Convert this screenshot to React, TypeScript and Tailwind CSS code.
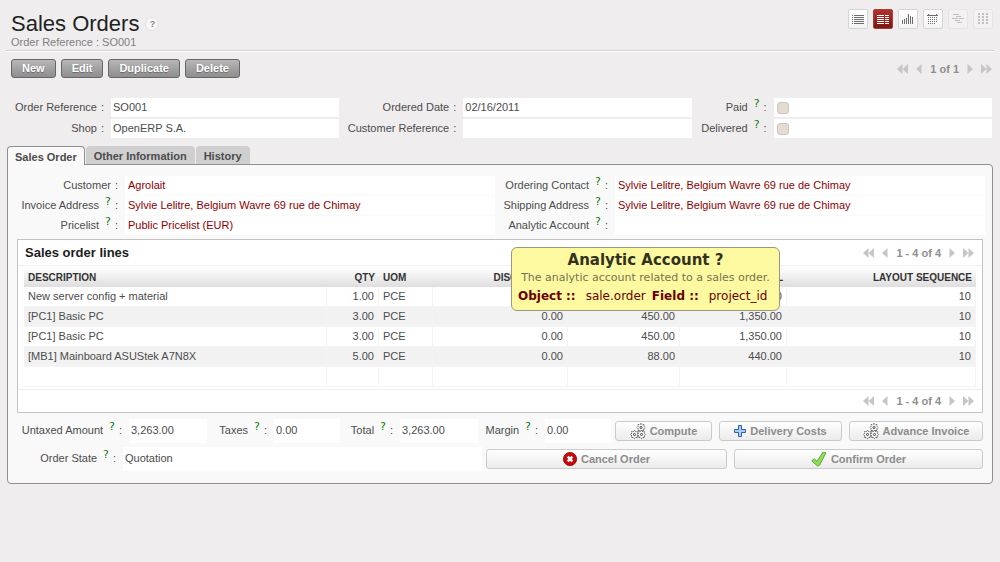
import React from 'react';
import clsx from 'clsx';

interface OrderLine {
  description: string;
  qty: string;
  uom: string;
  discount: string;
  price: string;
  subtotal: string;
  sequence: string;
}

const lines: OrderLine[] = [
  { description: 'New server config + material', qty: '1.00', uom: 'PCE', discount: '0.00', price: '123.00', subtotal: '123.00', sequence: '10' },
  { description: '[PC1] Basic PC', qty: '3.00', uom: 'PCE', discount: '0.00', price: '450.00', subtotal: '1,350.00', sequence: '10' },
  { description: '[PC1] Basic PC', qty: '3.00', uom: 'PCE', discount: '0.00', price: '450.00', subtotal: '1,350.00', sequence: '10' },
  { description: '[MB1] Mainboard ASUStek A7N8X', qty: '5.00', uom: 'PCE', discount: '0.00', price: '88.00', subtotal: '440.00', sequence: '10' },
];

/* ---------- icons ---------- */

const ListIcon = () => (
  <svg width="12" height="9" viewBox="0 0 12 9" fill="currentColor" shapeRendering="crispEdges">
    {[0, 2, 4, 6, 8].map((y) => (
      <g key={y}>
        <rect x="0" y={y} width="1" height="1" />
        <rect x="2" y={y} width="10" height="1" />
      </g>
    ))}
  </svg>
);

const FormIcon = () => (
  <svg width="12" height="9" viewBox="0 0 12 9" fill="currentColor" shapeRendering="crispEdges">
    {[0, 2, 4, 6, 8].map((y) => (
      <g key={y}>
        <rect x="0" y={y} width="7" height="1" />
        <rect x="8" y={y} width="4" height="1" />
      </g>
    ))}
  </svg>
);

const GraphIcon = () => (
  <svg width="12" height="10" viewBox="0 0 12 10" fill="currentColor" shapeRendering="crispEdges">
    <rect x="0" y="6" width="1" height="4" />
    <rect x="2" y="5" width="1" height="5" />
    <rect x="4" y="4" width="1" height="6" />
    <rect x="6" y="0" width="1" height="10" />
    <rect x="8" y="2" width="1" height="8" />
    <rect x="10" y="3" width="1" height="7" />
  </svg>
);

const CalendarIcon = () => (
  <svg width="12" height="11" viewBox="0 0 12 11" fill="currentColor" shapeRendering="crispEdges">
    <rect x="1" y="0" width="1" height="2" />
    <rect x="9" y="0" width="1" height="2" />
    <rect x="0" y="1" width="11" height="1" />
    {[3, 5, 7, 9].map((y) =>
      [1, 3, 5, 7, 9].map((x) => (x === 9 && y === 9 ? null : <rect key={`${x}-${y}`} x={x} y={y} width="1" height="1" />)),
    )}
  </svg>
);

const GanttIcon = () => (
  <svg width="12" height="10" viewBox="0 0 12 10" fill="currentColor" shapeRendering="crispEdges">
    <rect x="1" y="0" width="6" height="1" />
    <rect x="4" y="2" width="5" height="1" />
    <rect x="0" y="4" width="6" height="1" />
    <rect x="7" y="4" width="5" height="1" />
    <rect x="3" y="6" width="5" height="1" />
    <rect x="5" y="8" width="5" height="1" />
  </svg>
);

const KanbanIcon = () => (
  <svg width="10" height="12" viewBox="0 0 10 12" fill="currentColor" shapeRendering="crispEdges">
    {[0, 3, 6, 9].map((y) => [0, 4, 8].map((x) => <rect key={`${x}-${y}`} x={x} y={y} width="2" height="2" />))}
  </svg>
);

const Arrow = ({ dir, double }: { dir: 'left' | 'right'; double?: boolean }) => (
  <svg
    width={double ? 11 : 6}
    height="10"
    viewBox={double ? '0 0 11 10' : '0 0 6 10'}
    fill="currentColor"
    className={dir === 'right' ? 'rotate-180' : ''}
  >
    <path d="M0 5L5.500 0V10Z" />
    {double && <path d="M5.500 5L11 0V10Z" />}
  </svg>
);

const Cog = ({ x, y }: { x: number; y: number }) => (
  <g transform={`translate(${x} ${y})`}>
    <path d="M0 -4L1.200 -2.900L2.900 -2.900L2.900 -1.200L4 0L2.900 1.200L2.900 2.900L1.200 2.900L0 4L-1.200 2.900L-2.900 2.900L-2.900 1.200L-4 0L-2.900 -1.200L-2.900 -2.900L-1.200 -2.900Z" fill="#fff" stroke="#444" strokeWidth="0.900" strokeDasharray="1.800 0.700" />
    <circle r="1.100" fill="#fff" stroke="#333" strokeWidth="0.900" />
  </g>
);

const GearsIcon = () => (
  <svg width="16" height="16" viewBox="0 0 16 16">
    <Cog x={11} y={4.5} />
    <Cog x={4.5} y={11.5} />
    <Cog x={11.5} y={11.5} />
  </svg>
);

const PlusIcon = () => (
  <svg width="12" height="12" viewBox="0 0 12 12">
    <path d="M4.500 .5h3v4h4v3h-4v4h-3v-4h-4v-3h4z" fill="#a9cdf2" stroke="#2f62a8" strokeLinejoin="round" />
  </svg>
);

const CancelIcon = () => (
  <svg width="14" height="14" viewBox="0 0 14 14">
    <circle cx="7" cy="7" r="6.600" fill="#c40a0a" stroke="#980000" strokeWidth="0.800" />
    <path d="M4.700 4.700l4.600 4.600M9.300 4.700l-4.600 4.600" stroke="#fff" strokeWidth="2.400" />
  </svg>
);

const CheckIcon = () => (
  <svg width="16" height="16" viewBox="0 0 16 16">
    <path d="M.8 9.800L3.300 7.800L6 10.300L12 1.200L15 1.800L8.500 14.300L6.300 15Z" fill="#8fdc58" stroke="#5aa32c" strokeWidth="0.900" strokeLinejoin="round" />
  </svg>
);

/* ---------- building blocks ---------- */

const Pager = ({ text }: { text: string }) => (
  <nav className="flex items-center gap-2 font-bold text-[#8f8f8f]">
    <button type="button" aria-label="First" className="text-[#c6c6c6]"><Arrow dir="left" double /></button>
    <button type="button" aria-label="Previous" className="text-[#c6c6c6]"><Arrow dir="left" /></button>
    <span>{text}</span>
    <button type="button" aria-label="Next" className="text-[#c6c6c6]"><Arrow dir="right" /></button>
    <button type="button" aria-label="Last" className="text-[#c6c6c6]"><Arrow dir="right" double /></button>
  </nav>
);

interface FieldLabelProps {
  text: string;
  htmlFor: string;
  help?: boolean;
  children?: React.ReactNode;
}

const FieldLabel: React.FC<FieldLabelProps> = ({ text, htmlFor, help, children }) => (
  <div className="relative flex items-center justify-end pr-[7px] pb-[2px] whitespace-nowrap">
    <label htmlFor={htmlFor} className="flex">
      {text}
      {help && <sup className="top-0 -mt-[3px] ml-[6px] text-[11px] leading-3 text-[#0f7a0f] font-['DejaVu_Sans',sans-serif]">?</sup>}
      <span className="ml-1">:</span>
    </label>
    {children}
  </div>
);

const TextField = ({ id, value = '' }: { id: string; value?: string }) => (
  <input id={id} type="text" readOnly defaultValue={value} className="w-full min-w-0 bg-white px-[2px] pb-[2px] outline-none" />
);

const LinkField = ({ id, value }: { id: string; value: string }) => (
  <div className="flex items-center bg-white px-[3px] pb-[2px]">
    <a id={id} href="#" className="text-[#8b0000]">{value}</a>
  </div>
);

const CheckField = ({ id }: { id: string }) => (
  <div className="flex items-center bg-white px-[3px]">
    <input id={id} type="checkbox" disabled className="size-3 appearance-none rounded-[3px] border border-[#cfc6bb] bg-[#e4dcd2]" />
  </div>
);

const ToolbarButton = ({ children }: { children: React.ReactNode }) => (
  <button
    type="button"
    className="h-[19px] rounded-[3px] border border-[#666] bg-linear-to-b from-[#b8b8b8] to-[#8e8e8e] px-[10px] pb-px font-bold text-white text-shadow-[0_1px_1px_#666]"
  >
    {children}
  </button>
);

const ActionButton = ({ icon, children }: { icon: React.ReactNode; children: React.ReactNode }) => (
  <button
    type="button"
    className="flex h-5 items-center justify-center gap-1 rounded-[3px] border border-[#cbcbcb] bg-linear-to-b from-white to-[#ebebeb] font-bold whitespace-nowrap text-[#8c8c8c]"
  >
    {icon}
    {children}
  </button>
);

const views = [
  { name: 'List', icon: <ListIcon /> },
  { name: 'Form', icon: <FormIcon />, active: true },
  { name: 'Graph', icon: <GraphIcon /> },
  { name: 'Calendar', icon: <CalendarIcon /> },
  { name: 'Gantt', icon: <GanttIcon />, disabled: true },
  { name: 'Kanban', icon: <KanbanIcon />, disabled: true },
];

const ViewSwitcher = () => (
  <div className="flex gap-[5px]">
    {views.map((v) => (
      <button
        key={v.name}
        type="button"
        aria-label={v.name}
        disabled={v.disabled}
        className={clsx(
          'flex size-5 items-center justify-center rounded-[2px] border',
          v.active && 'border-[#a04038] bg-linear-to-b from-[#b5302a] to-[#7d1712] text-white',
          v.disabled && 'border-[#e6e4e5] bg-[#f3f1f2] text-[#c0c0c0]',
          !v.active && !v.disabled && 'border-[#d5d5d5] bg-linear-to-b from-white to-[#f4f4f4] text-[#6e6e6e]',
        )}
      >
        {v.icon}
      </button>
    ))}
  </div>
);

const HelpTooltip = () => (
  <div
    role="tooltip"
    className="absolute top-[31px] left-4 z-10 w-[269px] rounded-md border border-[#98987a] bg-[#fdf9a1] px-1 pt-[3px] pb-[5px] text-center font-['DejaVu_Sans',sans-serif]"
  >
    <h3 className="text-[15px] leading-[18px] font-bold text-[#32321f]">Analytic Account ?</h3>
    <p className="text-[11px] leading-[18px] text-[#74744f]">The analytic account related to a sales order.</p>
    <p className="flex gap-[6px] px-[2px] text-[12px] leading-[18px] text-[#6b0000]">
      <b>Object ::</b>
      <span className="ml-1">sale.order</span>
      <b>Field ::</b>
      <span className="ml-1">project_id</span>
    </p>
  </div>
);

const OrderLines = () => {
  const cell = 'h-5 border-r border-b border-[#f4f4f4] px-1 pb-px';
  const head = 'h-5 px-1 pt-[2px] text-[10px] font-bold';
  return (
    <section className="mt-1 mr-[2px] border border-[#c2c2c2] bg-white">
      <div className="flex h-[26px] items-center justify-between border-b border-[#f0f0f0] pr-2 pl-[7px]">
        <h2 className="text-[13px] font-bold text-[#1c1c1c]">Sales order lines</h2>
        <Pager text="1 - 4 of 4" />
      </div>
      <div className="px-[6px] pt-px pb-[2px]">
        <table className="w-full table-fixed border-separate border-spacing-0">
          <colgroup>
            <col className="w-[303px]" />
            <col className="w-[52px]" />
            <col className="w-[54px]" />
            <col className="w-[135px]" />
            <col className="w-[112px]" />
            <col className="w-[107px]" />
            <col className="w-[189px]" />
          </colgroup>
          <thead className="bg-linear-to-b from-white to-[#dedede] text-[#333]">
            <tr>
              <th className={clsx(head, 'text-left')}>DESCRIPTION</th>
              <th className={clsx(head, 'text-right')}>QTY</th>
              <th className={clsx(head, 'text-left')}>UOM</th>
              <th className={clsx(head, 'text-right')}>DISCOUNT (%)</th>
              <th className={clsx(head, 'text-right')}>UNIT PRICE</th>
              <th className={clsx(head, 'text-right')}>SUBTOTAL</th>
              <th className={clsx(head, 'text-right')}>LAYOUT SEQUENCE</th>
            </tr>
          </thead>
          <tbody>
            {lines.map((line, i) => (
              <tr key={i} className="even:bg-[#f2f2f2]">
                <td className={cell}>{line.description}</td>
                <td className={clsx(cell, 'text-right')}>{line.qty}</td>
                <td className={cell}>{line.uom}</td>
                <td className={clsx(cell, 'text-right')}>{line.discount}</td>
                <td className={clsx(cell, 'text-right')}>{line.price}</td>
                <td className={clsx(cell, 'text-right')}>{line.subtotal}</td>
                <td className={clsx(cell, 'text-right')}>{line.sequence}</td>
              </tr>
            ))}
            <tr>
              {[0, 1, 2, 3, 4, 5, 6].map((c) => (
                <td key={c} className={cell} />
              ))}
            </tr>
          </tbody>
        </table>
      </div>
      <div className="flex h-[23px] items-center justify-end border-t border-[#f0f0f0] pr-2">
        <Pager text="1 - 4 of 4" />
      </div>
    </section>
  );
};

export default function App() {
  return (
    <main className="min-h-screen bg-[#efedee] pb-8 font-['Liberation_Sans',Arial,sans-serif] text-[11px] leading-3 text-[#4c4c4c]">
      <header className="mx-[6px] flex items-start justify-between border-b border-[#d2d0d1] pl-[5px] pr-px pb-[2px] shadow-[0_1px_0_#fff]">
        <div className="pt-3">
          <h1 className="flex items-center gap-[6px] text-[22px] leading-6 text-[#222]">
            Sales Orders
            <a href="#" aria-label="Help" className="flex size-[14px] items-center justify-center rounded-full border border-[#e2e2e2] bg-[#f8f8f8] text-[9px] font-bold text-[#8a8a8a]">?</a>
          </h1>
          <p className="text-[#808080]">Order Reference : SO001</p>
        </div>
        <div className="pt-[9px]">
          <ViewSwitcher />
        </div>
      </header>

      <div className="flex items-center justify-between pt-2 pr-2 pl-[11px]">
        <div className="flex gap-[5px]">
          <ToolbarButton>New</ToolbarButton>
          <ToolbarButton>Edit</ToolbarButton>
          <ToolbarButton>Duplicate</ToolbarButton>
          <ToolbarButton>Delete</ToolbarButton>
        </div>
        <Pager text="1 of 1" />
      </div>

      <div className="mx-2 mt-5 grid auto-rows-[19px] grid-cols-[103px_23fr_124px_23fr_82px_22fr] gap-y-[2px]">
        <FieldLabel htmlFor="ref" text="Order Reference" />
        <TextField id="ref" value="SO001" />
        <FieldLabel htmlFor="date" text="Ordered Date" />
        <TextField id="date" value="02/16/2011" />
        <FieldLabel htmlFor="paid" text="Paid" help />
        <CheckField id="paid" />
        <FieldLabel htmlFor="shop" text="Shop" />
        <TextField id="shop" value="OpenERP S.A." />
        <FieldLabel htmlFor="custref" text="Customer Reference" />
        <TextField id="custref" />
        <FieldLabel htmlFor="delivered" text="Delivered" help />
        <CheckField id="delivered" />
      </div>

      <div className="mx-[7px] mt-2">
        <div role="tablist" className="flex h-[18px] gap-px font-bold">
          <button type="button" role="tab" aria-selected="true" className="relative z-10 h-[19px] rounded-t-[4px] border border-b-0 border-[#8f8f8f] bg-[#f9f9f9] px-[7px] pt-[2px]">
            Sales Order
          </button>
          <button type="button" role="tab" aria-selected="false" className="rounded-t-[4px] bg-[#cfcfcf] px-2 pt-[2px]">Other Information</button>
          <button type="button" role="tab" aria-selected="false" className="rounded-t-[4px] bg-[#cfcfcf] px-2 pt-[2px]">History</button>
        </div>

        <div className="rounded-b-[4px] rounded-tr-[4px] border border-[#8f8f8f] bg-[#f9f9f9] pt-[11px] pr-[7px] pb-3 pl-[9px]">
          <div className="grid auto-rows-[19px] grid-cols-[108px_1fr_120px_1fr] gap-y-px">
            <FieldLabel htmlFor="customer" text="Customer" />
            <LinkField id="customer" value="Agrolait" />
            <FieldLabel htmlFor="contact" text="Ordering Contact" help />
            <LinkField id="contact" value="Sylvie Lelitre, Belgium Wavre 69 rue de Chimay" />
            <FieldLabel htmlFor="invoice" text="Invoice Address" help />
            <LinkField id="invoice" value="Sylvie Lelitre, Belgium Wavre 69 rue de Chimay" />
            <FieldLabel htmlFor="shipping" text="Shipping Address" help />
            <LinkField id="shipping" value="Sylvie Lelitre, Belgium Wavre 69 rue de Chimay" />
            <FieldLabel htmlFor="pricelist" text="Pricelist" help />
            <LinkField id="pricelist" value="Public Pricelist (EUR)" />
            <FieldLabel htmlFor="analytic" text="Analytic Account" help>
              <HelpTooltip />
            </FieldLabel>
            <TextField id="analytic" />
          </div>

          <OrderLines />

          <div className="mt-[6px] mr-[2px] grid h-6 grid-cols-[112px_78fr_67px_66fr_60px_78fr_67px_66fr_101fr_130fr_141fr]">
            <FieldLabel htmlFor="untaxed" text="Untaxed Amount" help />
            <TextField id="untaxed" value="3,263.00" />
            <FieldLabel htmlFor="taxes" text="Taxes" help />
            <TextField id="taxes" value="0.00" />
            <FieldLabel htmlFor="total" text="Total" help />
            <TextField id="total" value="3,263.00" />
            <FieldLabel htmlFor="margin" text="Margin" help />
            <TextField id="margin" value="0.00" />
            <div className="grid items-center pl-1"><ActionButton icon={<GearsIcon />}>Compute</ActionButton></div>
            <div className="grid items-center pl-[7px]"><ActionButton icon={<PlusIcon />}>Delivery Costs</ActionButton></div>
            <div className="grid items-center pl-[7px]"><ActionButton icon={<GearsIcon />}>Advance Invoice</ActionButton></div>
          </div>

          <div className="mt-1 mr-[2px] grid h-6 grid-cols-[106px_359fr_245fr_256fr]">
            <FieldLabel htmlFor="state" text="Order State" help />
            <TextField id="state" value="Quotation" />
            <div className="grid items-center pl-1"><ActionButton icon={<CancelIcon />}>Cancel Order</ActionButton></div>
            <div className="grid items-center pl-[7px]"><ActionButton icon={<CheckIcon />}>Confirm Order</ActionButton></div>
          </div>
        </div>
      </div>
    </main>
  );
}
